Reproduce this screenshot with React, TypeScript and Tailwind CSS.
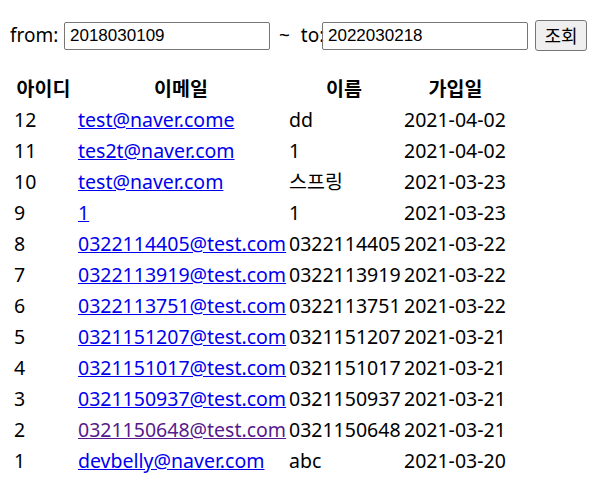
import React from "react";

const rows: [string, string, string, string, boolean?][] = [
  ["12", "test@naver.come", "dd", "2021-04-02"],
  ["11", "tes2t@naver.com", "1", "2021-04-02"],
  ["10", "test@naver.com", "스프링", "2021-03-23"],
  ["9", "1", "1", "2021-03-23"],
  ["8", "0322114405@test.com", "0322114405", "2021-03-22"],
  ["7", "0322113919@test.com", "0322113919", "2021-03-22"],
  ["6", "0322113751@test.com", "0322113751", "2021-03-22"],
  ["5", "0321151207@test.com", "0321151207", "2021-03-21"],
  ["4", "0321151017@test.com", "0321151017", "2021-03-21"],
  ["3", "0321150937@test.com", "0321150937", "2021-03-21"],
  ["2", "0321150648@test.com", "0321150648", "2021-03-21", true],
  ["1", "devbelly@naver.com", "abc", "2021-03-20"],
];

export default function App() {
  return (
    <div
      className="w-[608px] h-[499px] bg-white text-black overflow-hidden"
      style={{ fontFamily: '"Noto Sans", "Noto Sans CJK KR", sans-serif' }}
    >
      <div className="flex items-center h-[31px] mt-[20px] text-[19px]">
        <span className="w-[64px] shrink-0 pl-[10px] leading-none">from:</span>
        <input
          readOnly
          value="2018030109"
          className="w-[206px] shrink-0 h-[28px] border border-[#767676] rounded-[2px] px-[5px] text-[17px] text-black outline-none"
          style={{ fontFamily: '"Liberation Sans", Arial, sans-serif' }}
        />
        <span className="w-[52px] shrink-0 pl-[9px] leading-none whitespace-nowrap">
          ~ <span className="ml-[6px]">to:</span>
        </span>
        <input
          readOnly
          value="2022030218"
          className="w-[206px] shrink-0 h-[28px] border border-[#767676] rounded-[2px] px-[5px] text-[17px] text-black outline-none"
          style={{ fontFamily: '"Liberation Sans", Arial, sans-serif' }}
        />
        <button className="ml-[7px] shrink-0 w-[52px] h-[31px] border border-[#767676] rounded-[3px] bg-[#efefef] text-[18px] leading-none text-black">
          조회
        </button>
      </div>
      <table className="mt-[22px] ml-[14px] border-collapse table-fixed w-[498px] text-[19.5px]">
        <thead>
          <tr className="h-[31px]">
            <th className="w-[64px] pr-[5px] text-center font-bold">아이디</th>
            <th className="w-[211px] pr-[5px] text-center font-bold">이메일</th>
            <th className="w-[115px] pr-[5px] text-center font-bold">이름</th>
            <th className="w-[108px] pr-[5px] text-center font-bold">가입일</th>
          </tr>
        </thead>
        <tbody>
          {rows.map(([id, email, name, date, visited]) => (
            <tr key={id} className="h-[31px]">
              <td className="p-0 whitespace-nowrap">{id}</td>
              <td className="p-0 whitespace-nowrap">
                <a
                  href="#"
                  className={
                    "underline " + (visited ? "text-[#551a8b]" : "text-[#0000ee]")
                  }
                >
                  {email}
                </a>
              </td>
              <td className="p-0 whitespace-nowrap">{name}</td>
              <td className="p-0 whitespace-nowrap">{date}</td>
            </tr>
          ))}
        </tbody>
      </table>
    </div>
  );
}
